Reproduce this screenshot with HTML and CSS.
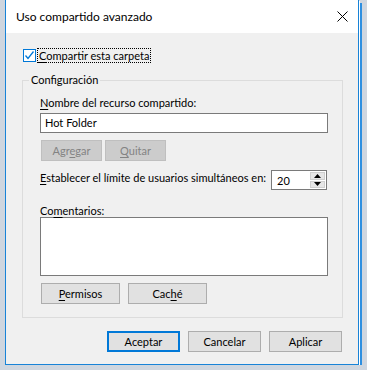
FILE: index.html
```html
<!DOCTYPE html>
<html lang="es">
<head>
    <meta charset="UTF-8">
    <title>Uso compartido avanzado</title>
    <link rel="stylesheet" href="styles.css">
</head>
<body>
    <div class="window">
        <div class="titlebar">
            <span class="title">Uso compartido avanzado</span>
            <svg class="close" width="11" height="11" viewBox="0 0 11 11">
                <path d="M0.5 0.5 L10.5 10.5 M10.5 0.5 L0.5 10.5" stroke="#000" stroke-width="1" fill="none"/>
            </svg>
        </div>
        <div class="content">
            <label class="check-row">
                <span class="checkbox">
                    <svg width="11" height="11" viewBox="0 0 11 11">
                        <path d="M1.5 5.5 L4 8.5 L9.5 1.5" stroke="#0078d7" stroke-width="1.3" fill="none"/>
                    </svg>
                </span>
                <span class="focus"><u>C</u>ompartir esta carpeta</span>
            </label>

            <fieldset class="group">
                <legend>Configuración</legend>

                <div class="label"><u>N</u>ombre del recurso compartido:</div>
                <div class="textbox">Hot Folder</div>

                <div class="btn-row">
                    <button class="btn disabled">Agr<u>e</u>gar</button>
                    <button class="btn disabled"><u>Q</u>uitar</button>
                </div>

                <div class="limit-row">
                    <span class="limit-label"><u>E</u>stablecer el límite de usuarios simultáneos en:</span>
                    <div class="spin">
                        <span class="spin-value">20</span>
                        <div class="spin-buttons">
                            <div class="spin-btn"><svg width="7" height="4" viewBox="0 0 7 4"><path d="M3.5 0 L7 4 L0 4 Z" fill="#000"/></svg></div>
                            <div class="spin-btn"><svg width="7" height="4" viewBox="0 0 7 4"><path d="M0 0 L7 0 L3.5 4 Z" fill="#000"/></svg></div>
                        </div>
                    </div>
                </div>

                <div class="label comments-label">Co<u>m</u>entarios:</div>
                <div class="textarea"></div>

                <div class="btn-row lower">
                    <button class="btn wide"><u>P</u>ermisos</button>
                    <button class="btn wide">Cac<u>h</u>é</button>
                </div>
            </fieldset>

            <div class="footer">
                <button class="btn dialog default">Aceptar</button>
                <button class="btn dialog">Cancelar</button>
                <button class="btn dialog">Aplicar</button>
            </div>
        </div>
    </div>
</body>
</html>
```

FILE: styles.css
```css
body {
    margin: 0;
    background-color: #cfd6df;
    font-family: Lato, "Liberation Sans", sans-serif;
    font-size: 11px;
    color: #000;
}
.window {
    margin-left: 5px;
    width: 352px;
    height: 364px;
    background: #f0f0f0;
    border: 1px solid #1883d7;
    border-top: none;
    box-shadow: 1px 1px 0 #ffffff, 3px 3px 0 #2d8fe0, 3px 4px 0 #1a6fa8;
}
.titlebar {
    height: 33px;
    background: #ffffff;
    display: flex;
    align-items: center;
    justify-content: space-between;
    padding: 0 10px 0 10px;
}
.title {
    font-size: 12px;
    margin-top: -1px;
}
.close {
    display: block;
    margin-top: -1px;
}
.content {
    padding: 15px 15px 0 16px;
}
.check-row {
    display: flex;
    align-items: center;
    gap: 2px;
    height: 14px;
    margin-left: 1px;
}
.checkbox {
    width: 11px;
    height: 11px;
    border: 1px solid #0078d7;
    background: #fff;
    display: flex;
}
.focus {
    outline: 1px dotted #000;
    padding: 0 1px;
    line-height: 13px;
}
u {
    text-decoration: underline;
    text-underline-offset: 2px;
}
.group {
    width: 288px;
    min-width: 0;
    margin: 11px 0 0 0;
    padding: 8px 14px 13px 17px;
    border: 1px solid #dcdcdc;
}
.group legend {
    padding: 0 2px;
    margin-left: -11px;
    line-height: 14px;
}
.label {
    height: 15px;
    line-height: 15px;
}
.textbox {
    margin-top: 3px;
    height: 18px;
    border: 1px solid #7a7a7a;
    background: #fff;
    padding: 0 4px;
    line-height: 18px;
}
.btn-row {
    display: flex;
    gap: 3px;
    margin-top: 7px;
    padding-left: 1px;
}
.btn {
    font-family: inherit;
    font-size: 11px;
    height: 21px;
    width: 61px;
    padding: 0;
    background: #e1e1e1;
    border: 1px solid #adadad;
    color: #000;
}
.btn.disabled {
    background: #cccccc;
    border-color: #bfbfbf;
    color: #838383;
}
.limit-row {
    display: flex;
    align-items: flex-start;
    justify-content: space-between;
    height: 20px;
    margin-top: 9px;
}
.limit-label {
    line-height: 15px;
    white-space: nowrap;
}
.spin {
    width: 54px;
    height: 18px;
    margin-right: 1px;
    border: 1px solid #7a7a7a;
    background: #fff;
    display: flex;
    justify-content: space-between;
}
.spin-value {
    padding-left: 5px;
    line-height: 20px;
}
.spin-buttons {
    width: 15px;
    display: flex;
    flex-direction: column;
    gap: 1px;
    padding: 1px 1px 1px 0;
}
.spin-btn {
    flex: 1;
    background: #e6e6e6;
    border: 1px solid #cfcfcf;
    display: flex;
    align-items: center;
    justify-content: center;
}
.comments-label {
    height: 13px;
    margin-top: 14px;
    line-height: 13px;
}
.textarea {
    height: 57px;
    border: 1px solid #7a7a7a;
    background: #fff;
}
.btn-row.lower {
    gap: 8px;
}
.btn.wide {
    width: 79px;
}
.footer {
    display: flex;
    justify-content: flex-end;
    gap: 8px;
    margin-top: 13px;
    padding-right: 1px;
}
.btn.dialog {
    width: 73px;
}
.btn.default {
    border: 2px solid #0078d7;
}
```
